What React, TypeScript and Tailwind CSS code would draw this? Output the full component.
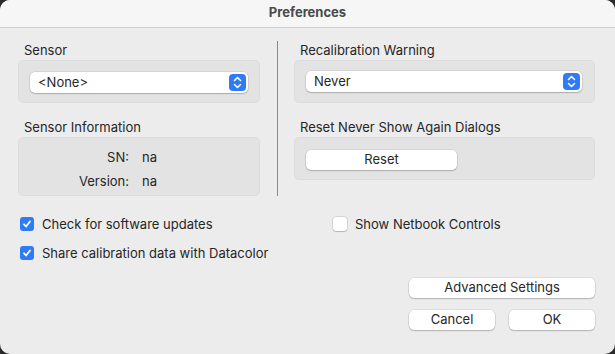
import React from "react";

const font = { fontFamily: 'Inter, "Liberation Sans", Arial, sans-serif' };

function Stepper() {
  return (
    <span className="flex h-[17px] w-[17px] items-center justify-center rounded-[4px] bg-[#2f7bf5]">
      <svg width="9" height="13" viewBox="0 0 9 13" fill="none">
        <path d="M1.5 4.5L4.5 1.5L7.5 4.5" stroke="white" strokeWidth="1.6" strokeLinecap="round" strokeLinejoin="round" />
        <path d="M1.5 8.5L4.5 11.5L7.5 8.5" stroke="white" strokeWidth="1.6" strokeLinecap="round" strokeLinejoin="round" />
      </svg>
    </span>
  );
}

function Popup({ value }: { value: string }) {
  return (
    <div className="flex h-[21px] items-center justify-between rounded-[5px] bg-white pl-[8px] pr-[2px] shadow-[0_0_0_0.5px_rgba(0,0,0,0.12),0_1px_1.5px_rgba(0,0,0,0.2)]">
      <span className="text-[13px] text-[#262626]">{value}</span>
      <Stepper />
    </div>
  );
}

function Button({ children, className }: { children: React.ReactNode; className: string }) {
  return (
    <button className={`flex h-[20px] items-center justify-center rounded-[5px] bg-white text-[13px] text-[#262626] shadow-[0_0_0_0.5px_rgba(0,0,0,0.12),0_1px_1.5px_rgba(0,0,0,0.2)] ${className}`}>
      {children}
    </button>
  );
}

function Checkbox({ checked, label }: { checked: boolean; label: string }) {
  return (
    <label className="flex items-center gap-[8px]">
      {checked ? (
        <span className="flex h-[14px] w-[14px] items-center justify-center rounded-[3px] bg-[#2f7bf5]">
          <svg width="10" height="10" viewBox="0 0 10 10" fill="none">
            <path d="M2 5.3L4.1 7.5L8 2.5" stroke="white" strokeWidth="1.8" strokeLinecap="round" strokeLinejoin="round" />
          </svg>
        </span>
      ) : (
        <span className="h-[14px] w-[14px] rounded-[3px] bg-white shadow-[0_0_0_0.5px_rgba(0,0,0,0.2),0_1px_1px_rgba(0,0,0,0.15)]" />
      )}
      <span className="text-[13px] leading-[16px] text-[#262626]">{label}</span>
    </label>
  );
}

function Group({ title, children, className }: { title: string; children: React.ReactNode; className: string }) {
  return (
    <div className="flex flex-col">
      <div className="pl-[6px] text-[13px] leading-[16px] text-[#262626]">{title}</div>
      <div className={`mt-[2px] rounded-[5px] border border-[#dcdcdc] bg-[#e3e3e3] ${className}`}>{children}</div>
    </div>
  );
}

export default function App() {
  return (
    <div className="h-[354px] w-[615px] bg-[#2a2a2a]" style={font}>
      <div className="flex h-full w-full flex-col overflow-hidden rounded-[10px] bg-[#ececec]">
        <div className="flex h-[28px] shrink-0 items-center justify-center border-b border-[#cfcfcf] bg-[#f6f6f6] pb-[1px]">
          <span className="text-[13px] font-bold text-[#4a4a4a]">Preferences</span>
        </div>

        <div className="flex pl-[18px] pt-[14px]">
          <div className="flex w-[242px] flex-col gap-[16px]">
            <Group title="Sensor" className="h-[43px] px-[11px] pt-[11px]">
              <Popup value="<None>" />
            </Group>
            <Group title="Sensor Information" className="h-[59px] pt-[8px]">
              <div className="flex h-[24px] items-center text-[13px] text-[#262626]">
                <span className="w-[110px] text-right">SN:</span>
                <span className="ml-[13px]">na</span>
              </div>
              <div className="flex h-[24px] items-center text-[13px] text-[#262626]">
                <span className="w-[110px] text-right">Version:</span>
                <span className="ml-[13px]">na</span>
              </div>
            </Group>
          </div>

          <div className="ml-[17px] mt-[-1px] h-[155px] w-px bg-[#8a8a8a]" />

          <div className="ml-[16px] flex w-[301px] flex-col gap-[16px]">
            <Group title="Recalibration Warning" className="h-[43px] pl-[11px] pr-[12px] pt-[10px]">
              <Popup value="Never" />
            </Group>
            <Group title="Reset Never Show Again Dialogs" className="h-[43px] pl-[11px] pt-[12px]">
              <Button className="w-[151px]">Reset</Button>
            </Group>
          </div>
        </div>

        <div className="mt-[20px] flex pl-[20px]">
          <div className="flex w-[313px] flex-col gap-[13px]">
            <Checkbox checked label="Check for software updates" />
            <Checkbox checked label="Share calibration data with Datacolor" />
          </div>
          <div>
            <Checkbox checked={false} label="Show Netbook Controls" />
          </div>
        </div>

        <div className="ml-[409px] mt-[17px] flex w-[186px] flex-col gap-[12px]">
          <Button className="w-full">Advanced Settings</Button>
          <div className="flex justify-between">
            <Button className="w-[86px]">Cancel</Button>
            <Button className="w-[86px]">OK</Button>
          </div>
        </div>
      </div>
    </div>
  );
}
